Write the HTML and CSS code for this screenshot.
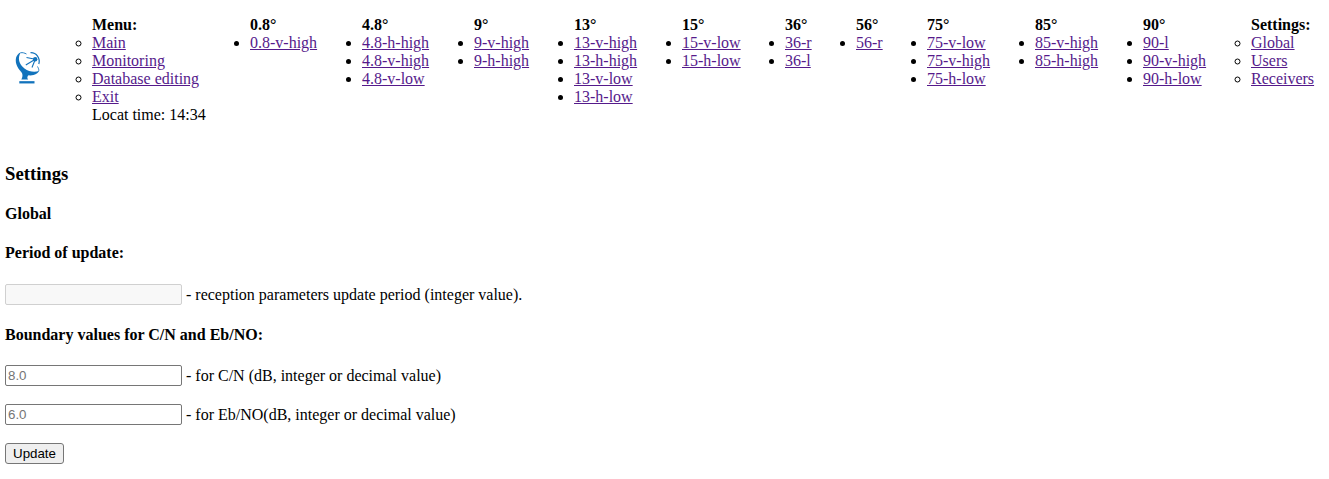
FILE: index.html
```html
<!DOCTYPE html>
<html lang="en">
<head>
<meta charset="utf-8">
<title>Settings</title>
<link rel="stylesheet" href="styles.css">
</head>
<body>
<header class="nav">
  <svg class="logo" viewBox="0 0 30 36" width="30" height="36" fill="none" stroke="#1273bc">
    <path d="M8.800 3.300C3.500 5.500 2.500 12 5.300 17.500C8.500 24.500 15.500 27.500 21.500 26C24.500 25 26.500 23.500 27.200 21.700C23 23.800 17 22.800 12.500 19.500C7 15.500 5.200 9 8.800 3.300Z" fill="#1273bc" stroke="none"/>
    <path d="M8.500 3.800C10.500 3.300 12.500 4 14.500 5M26.800 21.800C27 20.500 26.300 19 25.500 17.500" stroke-width="0.900"/>
    <path d="M8.500 22C11.500 25 10.500 28.500 9.300 30.500H16.200C15 29.500 14.800 27.500 17 25.500Z" fill="#1273bc" stroke="none"/>
    <path d="M7.300 33.300H22.500" stroke-width="2.300"/>
    <path d="M23.300 10.300L14.500 8.500M23.300 10.300L20 18.500M23.300 10.300L13.800 16" stroke-width="1.100"/>
    <circle cx="23.200" cy="10.300" r="2.200" fill="#1273bc" stroke="none"/>
    <path d="M18.500 3.700C24.500 3.500 28.500 9 26.800 15" stroke-width="1.200"/>
  </svg>
  <ul class="group hollow"><b>Menu:</b><li><a href="#">Main</a></li><li><a href="#">Monitoring</a></li><li><a href="#">Database editing</a></li><li><a href="#">Exit</a></li><span>Locat time: 14:34</span></ul>
  <ul class="group"><b>0.8°</b><li><a href="#">0.8-v-high</a></li></ul>
  <ul class="group"><b>4.8°</b><li><a href="#">4.8-h-high</a></li><li><a href="#">4.8-v-high</a></li><li><a href="#">4.8-v-low</a></li></ul>
  <ul class="group"><b>9°</b><li><a href="#">9-v-high</a></li><li><a href="#">9-h-high</a></li></ul>
  <ul class="group"><b>13°</b><li><a href="#">13-v-high</a></li><li><a href="#">13-h-high</a></li><li><a href="#">13-v-low</a></li><li><a href="#">13-h-low</a></li></ul>
  <ul class="group"><b>15°</b><li><a href="#">15-v-low</a></li><li><a href="#">15-h-low</a></li></ul>
  <ul class="group"><b>36°</b><li><a href="#">36-r</a></li><li><a href="#">36-l</a></li></ul>
  <ul class="group"><b>56°</b><li><a href="#">56-r</a></li></ul>
  <ul class="group"><b>75°</b><li><a href="#">75-v-low</a></li><li><a href="#">75-v-high</a></li><li><a href="#">75-h-low</a></li></ul>
  <ul class="group"><b>85°</b><li><a href="#">85-v-high</a></li><li><a href="#">85-h-high</a></li></ul>
  <ul class="group"><b>90°</b><li><a href="#">90-l</a></li><li><a href="#">90-v-high</a></li><li><a href="#">90-h-low</a></li></ul>
  <ul class="group hollow"><b>Settings:</b><li><a href="#">Global</a></li><li><a href="#">Users</a></li><li><a href="#">Receivers</a></li></ul>
</header>
<main class="settings">
  <h3>Settings</h3>
  <h4>Global</h4>
  <h4>Period of update:</h4>
  <div class="field first"><input type="text" disabled><span>- reception parameters update period (integer value).</span></div>
  <h4>Boundary values for C/N and Eb/NO:</h4>
  <div class="field"><input type="text" placeholder="8.0"><span>- for C/N (dB, integer or decimal value)</span></div>
  <div class="field"><input type="text" placeholder="6.0"><span>- for Eb/NO(dB, integer or decimal value)</span></div>
  <button class="update" type="button">Update</button>
</main>
</body>
</html>
```
FILE: styles.css
```css
body {
  margin: 0;
  background: #fff;
  color: #000;
  font: 16px/18px "Liberation Serif", "Times New Roman", serif;
  overflow: hidden;
}
.nav {
  display: grid;
  grid-template-columns: 80px 158px 112px 112px 100px 108px 103px 71px 71px 108px 108px 108px 78px;
  align-items: start;
  height: 147px;
  padding: 16px 0 0 12px;
  box-sizing: border-box;
}
.logo {
  margin-top: 33px;
}
.group {
  margin: 0;
  padding: 0;
  list-style: disc;
  white-space: nowrap;
}
.hollow {
  list-style: circle;
}
.group b,
.group span {
  display: block;
}
.group a {
  color: #551a8b;
}
.settings {
  display: flex;
  flex-direction: column;
  align-items: flex-start;
  padding: 16px 5px 0;
}
.settings h3 {
  margin: 0 0 21px;
  font-size: 18.72px;
  line-height: 21px;
}
.settings h4 {
  margin: 0 0 21px;
  font-size: 16px;
}
.field {
  display: flex;
  align-items: center;
  gap: 4px;
  height: 21px;
  margin-bottom: 18px;
}
.first {
  margin: 1px 0 21px;
}
.field input {
  box-sizing: border-box;
  width: 177px;
  height: 21px;
  margin: 0;
  padding: 1px 2px;
  border: 1px solid #767676;
  border-radius: 2px;
  font: 13.333px "Liberation Sans", Arial, sans-serif;
  background: #fff;
}
.field input::placeholder {
  color: #757575;
}
.field input:disabled {
  border-color: #d0d0d0;
  background: #f8f8f8;
}
.update {
  box-sizing: border-box;
  width: 59px;
  height: 21px;
  margin: 0;
  padding: 0;
  border: 1px solid #767676;
  border-radius: 3px;
  background: #efefef;
  color: #000;
  font: 13.333px "Liberation Sans", Arial, sans-serif;
}
```
